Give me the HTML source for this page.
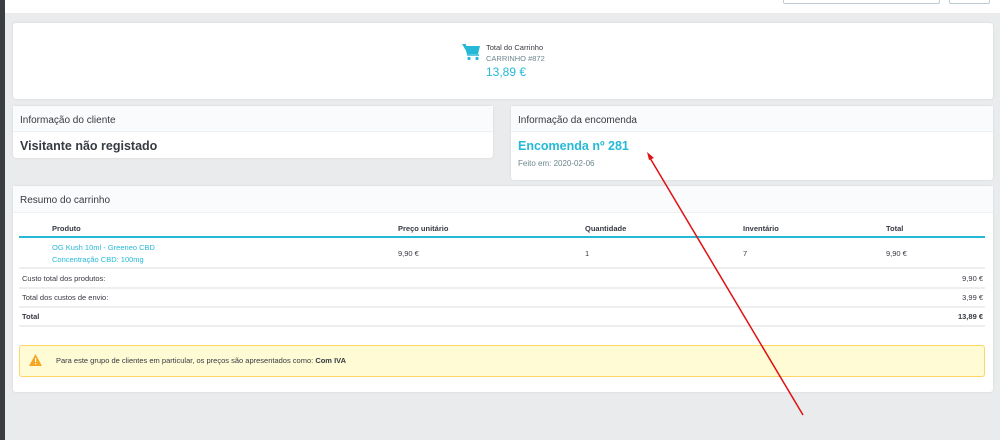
<!DOCTYPE html>
<html><head><meta charset="utf-8"><style>
*{box-sizing:border-box;margin:0;padding:0}
body{width:1000px;height:440px;overflow:hidden;background:#eaebec;font-family:"Liberation Sans",sans-serif;color:#363a41;position:relative}
.abs{position:absolute}
.card{position:absolute;background:#fff;border-radius:3px;box-shadow:0 0 2px rgba(0,0,0,.1)}
.hd{background:#fafbfc;border-bottom:1px solid #eef0f2;font-size:10px;color:#363a41;padding-left:7px;padding-top:3px;display:flex;align-items:center}
.th{font-size:7.5px;font-weight:bold;position:absolute;top:224px}
.sm{font-size:7.5px;position:absolute}
.line{position:absolute;left:19px;width:966px;height:2px;background:#eceeef}
</style></head><body>
<div class="abs" style="left:0;top:0;width:5px;height:440px;background:#3a3d42"></div>
<div class="abs" style="left:5px;top:0;width:995px;height:13px;background:#fff"></div>
<div class="abs" style="left:783px;top:-2px;width:157px;height:6px;border:1px solid #bbcdd2;border-radius:2px;background:#fff"></div>
<div class="abs" style="left:949px;top:-2px;width:41px;height:6px;border:1px solid #bbcdd2;border-radius:2px;background:#fff"></div>

<div class="card" style="left:13px;top:23px;width:980px;height:76px"></div>
<svg class="abs" style="left:462px;top:43px" width="20" height="18" viewBox="0 0 20 18"><path d="M0 1h3l1 2h14l-2 8H6z" fill="#25b9d7"/><path d="M3 1l3 11h11" stroke="#25b9d7" stroke-width="1.5" fill="none"/><circle cx="7" cy="15.5" r="1.6" fill="#25b9d7"/><circle cx="15" cy="15.5" r="1.6" fill="#25b9d7"/></svg>
<div class="abs" style="left:486px;top:43px;font-size:7.5px;color:#363a41">Total do Carrinho</div>
<div class="abs" style="left:486px;top:54px;font-size:7.5px;color:#6c868e">CARRINHO #872</div>
<div class="abs" style="left:486px;top:65px;font-size:12px;color:#25b9d7">13,89 €</div>

<div class="card" style="left:13px;top:106px;width:480px;height:52px">
<div class="hd" style="height:26px">Informação do cliente</div>
<div style="padding:7px 7px;font-size:12.5px;font-weight:bold">Visitante não registado</div>
</div>
<div class="card" style="left:511px;top:106px;width:482px;height:74px">
<div class="hd" style="height:26px">Informação da encomenda</div>
<div style="padding:7px 7px 3px;font-size:12.5px;font-weight:bold;color:#25b9d7">Encomenda nº 281</div>
<div style="padding:3px 7px;font-size:8px;color:#6c868e">Feito em: 2020-02-06</div>
</div>

<div class="card" style="left:13px;top:186px;width:980px;height:206px">
<div class="hd" style="height:27px">Resumo do carrinho</div>
</div>
<div class="th" style="left:52px">Produto</div>
<div class="th" style="left:398px">Preço unitário</div>
<div class="th" style="left:585px">Quantidade</div>
<div class="th" style="left:743px">Inventário</div>
<div class="th" style="left:886px">Total</div>
<div class="abs" style="left:19px;top:236px;width:966px;height:2px;background:#25b9d7"></div>
<div class="sm" style="left:52px;top:243px;color:#25b9d7">OG Kush 10ml - Greeneo CBD</div>
<div class="sm" style="left:52px;top:255px;color:#25b9d7">Concentração CBD: 100mg</div>
<div class="sm" style="left:398px;top:249px">9,90 €</div>
<div class="sm" style="left:585px;top:249px">1</div>
<div class="sm" style="left:743px;top:249px">7</div>
<div class="sm" style="left:886px;top:249px">9,90 €</div>
<div class="line" style="top:267px"></div>
<div class="sm" style="left:22px;top:274px">Custo total dos produtos:</div>
<div class="sm" style="right:17px;top:274px">9,90 €</div>
<div class="line" style="top:287px"></div>
<div class="sm" style="left:22px;top:293px">Total dos custos de envio:</div>
<div class="sm" style="right:17px;top:293px">3,99 €</div>
<div class="line" style="top:306px"></div>
<div class="sm" style="left:22px;top:312px;font-weight:bold">Total</div>
<div class="sm" style="right:17px;top:312px;font-weight:bold">13,89 €</div>
<div class="line" style="top:325px"></div>

<div class="abs" style="left:19px;top:345px;width:966px;height:32px;background:#fffbd5;border:1px solid #fcd669;border-radius:3px"></div>
<svg class="abs" style="left:29px;top:354px" width="13" height="12" viewBox="0 0 13 12"><path d="M6.5 0L13 12H0z" fill="#f5a623"/><rect x="6" y="4" width="1.2" height="4" fill="#fff"/><rect x="6" y="9" width="1.2" height="1.2" fill="#fff"/></svg>
<div class="sm" style="left:56px;top:356px">Para este grupo de clientes em particular, os preços são apresentados como: <b>Com IVA</b></div>

<svg class="abs" style="left:0;top:0" width="1000" height="440"><line x1="803" y1="415" x2="650" y2="158" stroke="#e01010" stroke-width="1.5"/><path d="M647 152l7 6-5 2z" fill="#e01010"/></svg>
</body></html>
